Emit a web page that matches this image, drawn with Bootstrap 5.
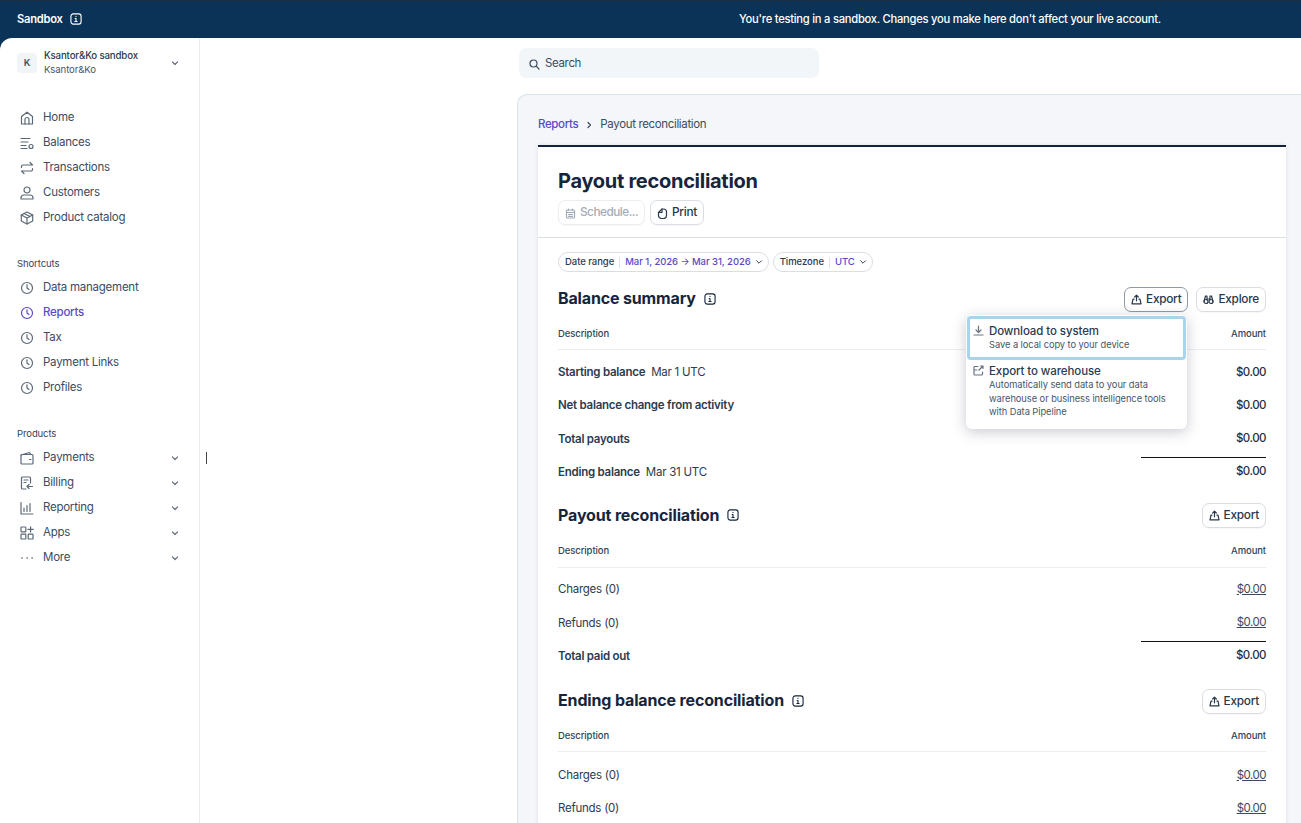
<!DOCTYPE html>
<html>
<head>
    <meta charset="UTF-8">
    <title>Payout reconciliation</title>
    <link href="https://cdn.jsdelivr.net/npm/bootstrap@5.3.0/dist/css/bootstrap.min.css" rel="stylesheet">
    <script src="https://cdn.jsdelivr.net/npm/bootstrap@5.3.0/dist/js/bootstrap.bundle.min.js"></script>
    <style>
        html, body { height: 823px; overflow: hidden; }
        body { background: #0b3358; font-family: "Inter", "Liberation Sans", sans-serif; font-size: 11.5px; color: #1a2a3f; letter-spacing: -0.25px; }
        svg { fill: none; stroke: currentColor; stroke-width: 1.2; stroke-linecap: round; stroke-linejoin: round; flex-shrink: 0; }
        .top-strip { height: 38px; color: #fff; font-weight: 500; border-top: 1px solid #1d2d40; font-size: 11.2px; }
        .top-name { width: 199px; padding-left: 17px; font-weight: 600; gap: 7px; }
        .top-msg { margin-left: 440px; width: 622px; text-align: center; }
        .page-wrap { height: 785px; background: #fff; border-top-left-radius: 12px; position: relative; overflow: hidden; }
        .side-col { width: 200px; height: 100%; border-right: 1px solid #ebeef1; padding-left: 17px; padding-right: 19px; flex-shrink: 0; }
        .acct { height: 24px; margin-top: 13px; margin-bottom: 30px; }
        .acct-badge { width: 20px; height: 20px; border-radius: 4px; background: #f2f5f8; font-size: 9.5px; font-weight: 600; color: #425466; margin-right: 7px; }
        .acct-name { font-size: 9.7px; line-height: 14px; font-weight: 500; color: #2d3b4e; letter-spacing: -0.15px; }
        .acct-sub { font-size: 9.6px; line-height: 14px; color: #46566a; letter-spacing: -0.1px; }
        .side-head { font-size: 9.5px; line-height: 14px; color: #33445a; margin-bottom: 4px; letter-spacing: -0.1px; }
        .side-item { height: 25px; color: #3c4b5f; }
        .side-item .ico { width: 26px; padding-left: 3px; color: #5b6878; line-height: 0; }
        .side-item.active, .side-item.active .ico { color: #5b48c8; font-weight: 500; }
        .chev { color: #6a7383; }
        .side-group { margin-bottom: 27px; }
        .main-col { flex: 1 1 auto; min-width: 0; padding-left: 319px; padding-top: 10px; }
        .find-box { width: 300px; height: 30px; background: #f3f6f9; border-radius: 7px; padding-left: 10px; padding-top: 2px; gap: 5px; color: #3c4b5f; letter-spacing: -0.35px; }
        .panel { margin-top: 16px; margin-left: -2px; height: 800px; background: #f4f6f9; border: 1px solid #d8e2ec; border-right: 0; border-top-left-radius: 10px; padding: 21px 15px 0 20px; }
        .crumbs { height: 18px; margin-bottom: 11px; gap: 7px; color: #3c4b5f; letter-spacing: -0.35px; }
        .crumbs a { color: #5b48c8; text-decoration: none; font-weight: 500; }
        .sheet { background: #fff; border-top: 2px solid #14233c; box-shadow: 0 0 4px rgba(60, 66, 87, .12); height: 700px; }
        .sheet-head { height: 91px; padding: 21px 20px 0; border-bottom: 1px solid #d8dee4; }
        .sheet-title { font-size: 20px; line-height: 26px; font-weight: 700; margin: 0 0 6px; color: #16253c; letter-spacing: -0.28px; }
        .btn-pair { gap: 5px; }
        .mini-btn { height: 25px; padding: 1px 6px 0; border: 1px solid #d8dee4; border-radius: 7px; background: #fff; font-size: 11.8px; font-weight: 500; gap: 4px; color: #28374b; box-shadow: 0 1px 1px rgba(0,0,0,.03); }
        .mini-btn.off { color: #a3acba; border-color: #ebeef1; letter-spacing: -0.5px; }
        .mini-btn.on { border-color: #8d99a8; }
        .sheet-body { padding: 14px 20px 0 20px; }
        .chip-row { margin-bottom: 13px; }
        .chip { height: 20px; border: 1px solid #d8dee4; border-radius: 10px; padding: 0 5px 0 6px; font-size: 9.5px; font-weight: 500; color: #2c3b4f; letter-spacing: -0.05px; }
        .chip i { display: block; width: 1px; height: 11px; background: #e0e4ea; margin: 0 5px; }
        .chip b { font-weight: 500; color: #5b48c8; }
        .sec-head { height: 28px; margin-bottom: 14px; }
        .sec-head.sec-two { margin-top: 12px; margin-bottom: 15px; }
        .sec-head.sec-three { margin-top: 14px; }
        .sec-title { font-size: 16px; font-weight: 700; color: #16253c; margin: 0; letter-spacing: -0.15px; }
        .col-heads { font-size: 9.5px; font-weight: 500; color: #33445a; border-bottom: 1px solid #ebeef1; padding-bottom: 8px; line-height: 14px; margin-bottom: 6px; letter-spacing: -0.1px; }
        .col-heads.heads-two { padding-bottom: 9px; margin-bottom: 5px; }
        .col-heads.heads-three { margin-bottom: 7px; }
        .line-row { height: 33.3px; color: #2d3b4e; }
        .line-row strong { font-weight: 600; }
        .line-row .amt { font-weight: 500; font-size: 11.5px; color: #1f2e43; letter-spacing: -0.5px; margin-bottom: 1px; }
        .amt-link { font-size: 11.5px; text-decoration: underline; color: #3c4b5f; letter-spacing: -0.5px; margin-bottom: 1px; }
        .rule-top { width: 125px; border-top: 1px solid #111; position: absolute; right: 0; top: 1px; }
        .popup { position: absolute; left: 966px; top: 277px; width: 221px; height: 114px; background: #fff; border-radius: 6px; box-shadow: 0 3px 14px rgba(60, 66, 87, .28); z-index: 5; letter-spacing: -0.05px; }
        .popup-item { padding: 4px 8px 0 7px; gap: 5px; }
        .popup-item.focused { height: 44px; margin: 1px 1px 0; border: 3px solid #a8d4ee; border-radius: 4px; padding: 5px 6px 0 3px; }
        .popup-title { font-size: 11.5px; line-height: 14px; font-weight: 500; color: #2a3a50; letter-spacing: -0.1px; }
        .popup-desc { font-size: 9.3px; line-height: 13.5px; color: #46566a; }
        .popup svg { color: #6a7383; margin-top: 1px; }
        .caret-mark { position: absolute; left: 206px; top: 414px; width: 1px; height: 12px; background: #444; }
    </style>
</head>
<body>
    <div class="top-strip d-flex align-items-center">
        <div class="top-name d-flex align-items-center">Sandbox
            <svg width="12" height="12" viewBox="0 0 13 13"><rect x="1" y="1" width="11" height="11" rx="2.5"/><path d="M6.5 6v3.2M5.3 9.2h2.4M5.6 6h.9M6.5 3.6v.2"/></svg>
        </div>
        <div class="top-msg">You're testing in a sandbox. Changes you make here don't affect your live account.</div>
    </div>

    <div class="page-wrap d-flex">
        <div class="side-col">
            <div class="acct d-flex align-items-center">
                <div class="acct-badge d-flex align-items-center justify-content-center">K</div>
                <div class="flex-grow-1">
                    <div class="acct-name">Ksantor&amp;Ko sandbox</div>
                    <div class="acct-sub">Ksantor&amp;Ko</div>
                </div>
                <svg class="chev" width="10" height="10" viewBox="0 0 10 10"><path d="M2.5 4l2.5 2.5L7.5 4"/></svg>
            </div>

            <div class="side-group">
                <div class="side-item d-flex align-items-center"><span class="ico"><svg width="14" height="14" viewBox="0 0 14 14"><path d="M1.5 13V5.5L7 1.2l5.500 4.300V13z"/><path d="M5 13V8.500a2 2 0 0 1 4 0V13"/></svg></span>Home</div>
                <div class="side-item d-flex align-items-center"><span class="ico"><svg width="14" height="14" viewBox="0 0 14 14"><path d="M1 2.500h9M1 6h7M1 9.500h5M1 12.500h6"/><circle cx="11" cy="10.500" r="2"/></svg></span>Balances</div>
                <div class="side-item d-flex align-items-center"><span class="ico"><svg width="14" height="14" viewBox="0 0 14 14"><path d="M1.500 6.500V5.500a1.500 1.500 0 0 1 1.500-1.500h9.500L10 1.500"/><path d="M12.500 7.500v1a1.500 1.500 0 0 1-1.500 1.500H1.500L4 12.500"/></svg></span>Transactions</div>
                <div class="side-item d-flex align-items-center"><span class="ico"><svg width="14" height="14" viewBox="0 0 14 14"><circle cx="7" cy="4" r="3"/><path d="M1 13v-1a3 3 0 0 1 3-3h6a3 3 0 0 1 3 3v1z"/></svg></span>Customers</div>
                <div class="side-item d-flex align-items-center"><span class="ico"><svg width="14" height="14" viewBox="0 0 14 14"><path d="M7 1l5.700 3v6L7 13l-5.700-3V4z"/><path d="M1.300 4L7 7l5.700-3M7 7v6M4 2.500L10 5.500"/></svg></span>Product catalog</div>
            </div>

            <div class="side-group">
                <div class="side-head">Shortcuts</div>
                <div class="side-item d-flex align-items-center"><span class="ico"><svg width="14" height="14" viewBox="0 0 14 14"><circle cx="7" cy="7" r="5.500"/><path d="M7 3.800V7l2 1.500"/></svg></span>Data management</div>
                <div class="side-item active d-flex align-items-center"><span class="ico"><svg width="14" height="14" viewBox="0 0 14 14"><circle cx="7" cy="7" r="5.500"/><path d="M7 3.800V7l2 1.500"/></svg></span>Reports</div>
                <div class="side-item d-flex align-items-center"><span class="ico"><svg width="14" height="14" viewBox="0 0 14 14"><circle cx="7" cy="7" r="5.500"/><path d="M7 3.800V7l2 1.500"/></svg></span>Tax</div>
                <div class="side-item d-flex align-items-center"><span class="ico"><svg width="14" height="14" viewBox="0 0 14 14"><circle cx="7" cy="7" r="5.500"/><path d="M7 3.800V7l2 1.500"/></svg></span>Payment Links</div>
                <div class="side-item d-flex align-items-center"><span class="ico"><svg width="14" height="14" viewBox="0 0 14 14"><circle cx="7" cy="7" r="5.500"/><path d="M7 3.800V7l2 1.500"/></svg></span>Profiles</div>
            </div>

            <div>
                <div class="side-head">Products</div>
                <div class="side-item d-flex align-items-center"><span class="ico"><svg width="14" height="14" viewBox="0 0 14 14"><rect x="1" y="3.500" width="12" height="9.500" rx="1"/><path d="M1 4L9.500 1.500 11 3.500M9.500 8.500h1.500"/></svg></span><span class="flex-grow-1">Payments</span><svg class="chev" width="10" height="10" viewBox="0 0 10 10"><path d="M2.500 4l2.500 2.500L7.500 4"/></svg></div>
                <div class="side-item d-flex align-items-center"><span class="ico"><svg width="14" height="14" viewBox="0 0 14 14"><path d="M6 13H2.500a1 1 0 0 1-1-1V2a1 1 0 0 1 1-1h7a1 1 0 0 1 1 1v5"/><path d="M4 4h4M4 6.500h2M7 10.500h5.500M9 8.500l-2 2 2 2"/></svg></span><span class="flex-grow-1">Billing</span><svg class="chev" width="10" height="10" viewBox="0 0 10 10"><path d="M2.500 4l2.500 2.500L7.500 4"/></svg></div>
                <div class="side-item d-flex align-items-center"><span class="ico"><svg width="14" height="14" viewBox="0 0 14 14"><path d="M1 1.500V13h12M4 7v3.500M7 4.500v6M10 2.500v8"/></svg></span><span class="flex-grow-1">Reporting</span><svg class="chev" width="10" height="10" viewBox="0 0 10 10"><path d="M2.500 4l2.500 2.500L7.500 4"/></svg></div>
                <div class="side-item d-flex align-items-center"><span class="ico"><svg width="14" height="14" viewBox="0 0 14 14"><rect x="1" y="1" width="4.800" height="4.800" rx=".6"/><rect x="1" y="8.200" width="4.800" height="4.800" rx=".6"/><rect x="8.200" y="8.200" width="4.800" height="4.800" rx=".6"/><path d="M10.600 .8v5.200M8 3.400h5.200"/></svg></span><span class="flex-grow-1">Apps</span><svg class="chev" width="10" height="10" viewBox="0 0 10 10"><path d="M2.500 4l2.500 2.500L7.500 4"/></svg></div>
                <div class="side-item d-flex align-items-center"><span class="ico"><svg width="14" height="14" viewBox="0 0 14 14"><path d="M2 7h.2M7 7h.2M12 7h.2" stroke-width="1.600"/></svg></span><span class="flex-grow-1">More</span><svg class="chev" width="10" height="10" viewBox="0 0 10 10"><path d="M2.500 4l2.500 2.500L7.500 4"/></svg></div>
            </div>
        </div>

        <div class="main-col">
            <div class="find-box d-flex align-items-center">
                <svg width="11" height="11" viewBox="0 0 11 11"><circle cx="4.500" cy="4.500" r="3.500"/><path d="M7.200 7.200L10 10"/></svg>
                Search
            </div>

            <div class="panel">
                <div class="crumbs d-flex align-items-center">
                    <a href="#">Reports</a>
                    <svg width="8" height="8" viewBox="0 0 8 8"><path d="M3 1.500L5.500 4 3 6.500"/></svg>
                    <span>Payout reconciliation</span>
                </div>

                <div class="sheet">
                    <div class="sheet-head">
                        <h1 class="sheet-title">Payout reconciliation</h1>
                        <div class="btn-pair d-flex">
                            <div class="mini-btn off d-flex align-items-center"><svg width="11" height="11" viewBox="0 0 11 11"><rect x="1.500" y="2" width="8" height="8" rx="1"/><path d="M3.500 1v1.500M7.500 1v1.500M1.500 4.500h8M3.500 6.500h4M3.500 8.300h4"/></svg>Schedule...</div>
                            <div class="mini-btn d-flex align-items-center"><svg width="11" height="11" viewBox="0 0 11 11"><path d="M5 1h1.500a3 3 0 0 1 3 3v3.500a3 3 0 0 1-3 3h-2a3 3 0 0 1-3-3V4.500z"/><path d="M5 1v3.500H1.500"/></svg>Print</div>
                        </div>
                    </div>

                    <div class="sheet-body">
                        <div class="chip-row d-flex gap-1">
                            <div class="chip d-flex align-items-center">Date range<i></i><b>Mar 1, 2026 → Mar 31, 2026</b><svg class="ms-1" width="8" height="8" viewBox="0 0 10 10"><path d="M2 3.500l3 3 3-3"/></svg></div>
                            <div class="chip d-flex align-items-center">Timezone<i></i><b>UTC</b><svg class="ms-1" width="8" height="8" viewBox="0 0 10 10"><path d="M2 3.500l3 3 3-3"/></svg></div>
                        </div>

                        <div class="sec-head d-flex align-items-center">
                            <h2 class="sec-title flex-grow-1 d-flex align-items-center gap-2">Balance summary <svg width="12" height="12" viewBox="0 0 13 13"><rect x="1" y="1" width="11" height="11" rx="2.500"/><path d="M6.500 6v3.200M5.300 9.200h2.400M5.600 6h.9M6.500 3.600v.2"/></svg></h2>
                            <div class="mini-btn on d-flex align-items-center"><svg width="11" height="11" viewBox="0 0 11 11"><path d="M5.500 6.800V1.200M3.700 3l1.800-1.800L7.300 3M3 5.200H2L1 9.800h9L9 5.200H8"/></svg>Export</div>
                            <div class="mini-btn d-flex align-items-center ms-2"><svg width="11" height="11" viewBox="0 0 11 11"><circle cx="3" cy="7.500" r="2"/><circle cx="8" cy="7.500" r="2"/><path d="M1 7.500L2.500 2h1.500v4M10 7.500L8.500 2H7v4M4.500 5h2"/></svg>Explore</div>
                        </div>
                        <div class="col-heads d-flex justify-content-between"><span>Description</span><span>Amount</span></div>
                        <div class="line-row d-flex align-items-center justify-content-between"><span><strong>Starting balance</strong>&nbsp; Mar 1 UTC</span><span class="amt">$0.00</span></div>
                        <div class="line-row d-flex align-items-center justify-content-between"><strong>Net balance change from activity</strong><span class="amt">$0.00</span></div>
                        <div class="line-row d-flex align-items-center justify-content-between"><strong>Total payouts</strong><span class="amt">$0.00</span></div>
                        <div class="line-row d-flex align-items-center justify-content-between position-relative"><div class="rule-top"></div><span><strong>Ending balance</strong>&nbsp; Mar 31 UTC</span><span class="amt">$0.00</span></div>

                        <div class="sec-head sec-two d-flex align-items-center">
                            <h2 class="sec-title flex-grow-1 d-flex align-items-center gap-2">Payout reconciliation <svg width="12" height="12" viewBox="0 0 13 13"><rect x="1" y="1" width="11" height="11" rx="2.500"/><path d="M6.500 6v3.200M5.300 9.200h2.400M5.600 6h.9M6.500 3.600v.2"/></svg></h2>
                            <div class="mini-btn d-flex align-items-center"><svg width="11" height="11" viewBox="0 0 11 11"><path d="M5.500 6.800V1.200M3.700 3l1.800-1.800L7.300 3M3 5.200H2L1 9.800h9L9 5.200H8"/></svg>Export</div>
                        </div>
                        <div class="col-heads heads-two d-flex justify-content-between"><span>Description</span><span>Amount</span></div>
                        <div class="line-row d-flex align-items-center justify-content-between"><span>Charges (0)</span><span class="amt-link">$0.00</span></div>
                        <div class="line-row d-flex align-items-center justify-content-between"><span>Refunds (0)</span><span class="amt-link">$0.00</span></div>
                        <div class="line-row d-flex align-items-center justify-content-between position-relative"><div class="rule-top"></div><strong>Total paid out</strong><span class="amt">$0.00</span></div>

                        <div class="sec-head sec-three d-flex align-items-center">
                            <h2 class="sec-title flex-grow-1 d-flex align-items-center gap-2">Ending balance reconciliation <svg width="12" height="12" viewBox="0 0 13 13"><rect x="1" y="1" width="11" height="11" rx="2.500"/><path d="M6.500 6v3.200M5.300 9.200h2.400M5.600 6h.9M6.500 3.600v.2"/></svg></h2>
                            <div class="mini-btn d-flex align-items-center"><svg width="11" height="11" viewBox="0 0 11 11"><path d="M5.500 6.800V1.200M3.700 3l1.800-1.800L7.300 3M3 5.200H2L1 9.800h9L9 5.200H8"/></svg>Export</div>
                        </div>
                        <div class="col-heads heads-three d-flex justify-content-between"><span>Description</span><span>Amount</span></div>
                        <div class="line-row d-flex align-items-center justify-content-between"><span>Charges (0)</span><span class="amt-link">$0.00</span></div>
                        <div class="line-row d-flex align-items-center justify-content-between"><span>Refunds (0)</span><span class="amt-link">$0.00</span></div>
                    </div>
                </div>
            </div>
        </div>

        <div class="caret-mark"></div>

        <div class="popup">
            <div class="popup-item focused d-flex">
                <svg width="11" height="11" viewBox="0 0 11 11"><path d="M5.500 1v6M3 5l2.500 2.500L8 5M1 10h9"/></svg>
                <div>
                    <div class="popup-title">Download to system</div>
                    <div class="popup-desc">Save a local copy to your device</div>
                </div>
            </div>
            <div class="popup-item d-flex">
                <svg width="11" height="11" viewBox="0 0 11 11"><path d="M5 1.500H2a1 1 0 0 0-1 1v6.500a1 1 0 0 0 1 1h6.500a1 1 0 0 0 1-1V7M1 5h3M6 5l4-4M7.500 1H10v2.500"/></svg>
                <div>
                    <div class="popup-title">Export to warehouse</div>
                    <div class="popup-desc">Automatically send data to your data warehouse or business intelligence tools with Data Pipeline</div>
                </div>
            </div>
        </div>
    </div>
</body>
</html>
